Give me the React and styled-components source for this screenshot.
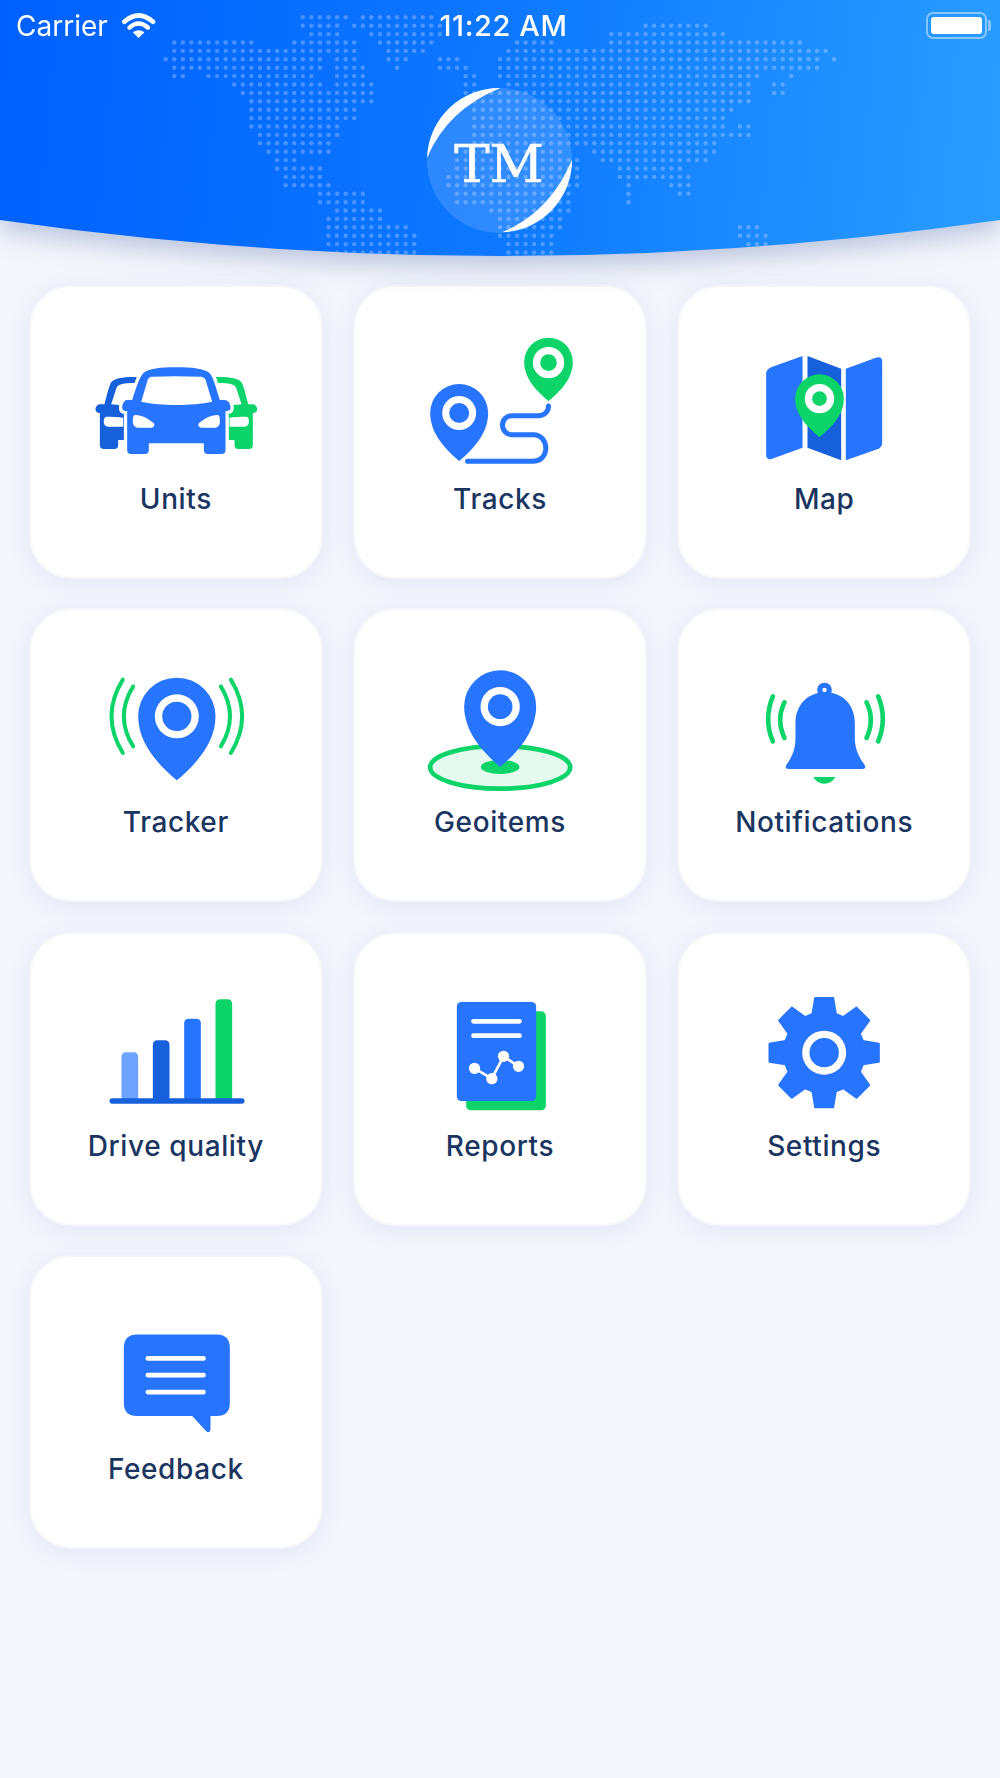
import React from 'react'
import styled, { createGlobalStyle } from 'styled-components'

const BLUE = '#2774ff'
const DARK = '#1760dc'
const LIGHT = '#6ea3ff'
const GREEN = '#0dd468'

// world map dots: one line per row, [first column, last column]
const MAP_ROWS = [
    [[16, 21], [23, 31]],
    [[16, 20], [22, 32], [56, 63]],
    [[17, 20], [24, 32], [52, 65]],
    [[1, 10], [15, 22], [25, 31], [41, 45], [52, 74]],
    [[1, 22], [26, 30], [40, 77]],
    [[0, 18], [20, 22], [26, 28], [32, 34], [39, 76], [78, 78]],
    [[1, 18], [20, 23], [27, 27], [32, 35], [39, 76]],
    [[1, 2], [5, 17], [20, 23], [35, 36], [39, 69], [73, 73]],
    [[8, 18], [20, 24], [35, 36], [40, 68], [71, 72]],
    [[9, 24], [35, 68], [71, 72]],
    [[10, 24], [36, 68]],
    [[10, 22], [36, 66]],
    [[10, 22], [36, 65]],
    [[10, 20], [36, 65], [67, 68]],
    [[11, 20], [36, 68]],
    [[11, 19], [36, 64]],
    [[12, 19], [35, 46], [50, 64]],
    [[13, 15], [34, 48], [51, 63]],
    [[13, 18], [34, 48], [53, 60]],
    [[14, 18], [33, 48], [53, 61]],
    [[14, 19], [33, 48], [54, 54], [59, 61]],
    [[18, 23], [34, 47], [54, 54], [60, 61]],
    [[18, 23], [34, 47], [54, 54]],
    [[20, 25], [38, 47]],
    [[19, 25], [39, 46]],
    [[19, 28], [39, 46], [67, 69]],
    [[19, 29], [39, 45], [67, 70]],
    [[19, 29], [40, 45], [68, 70]],
    [[20, 29], [40, 45]],
]

const MAP_DOTS = MAP_ROWS.flatMap((row, r) =>
    row.flatMap(([from, to]) =>
        Array.from({ length: to - from + 1 }, (_, i) => ({
            x: 165.7 + (from + i) * 8.57,
            y: 17.3 + r * 8.4,
        }))
    )
)

// gear outline, 8 teeth around (223, 202)
const GEAR_PATH = (() => {
    const tooth = [[-35, -116], [-27, -164], [27, -164], [35, -116]]
    const points = []
    for (let i = 0; i < 8; i++) {
        const a = (i * Math.PI) / 4
        tooth.forEach(([x, y]) => {
            points.push(`${(223 + x * Math.cos(a) - y * Math.sin(a)).toFixed(1)} ${(202 + x * Math.sin(a) + y * Math.cos(a)).toFixed(1)}`)
        })
    }
    return 'M' + points.join('L') + 'Z'
})()

const Pin = ({ cx, top, R, h, ringY, ringR, holeR, fill = BLUE }) => {
    const path = `M${cx} ${top + h}
        C${cx - R * 0.41} ${top + h * 0.87} ${cx - R} ${top + R + (h - R) * 0.45} ${cx - R} ${top + R}
        A${R} ${R} 0 0 1 ${cx + R} ${top + R}
        C${cx + R} ${top + R + (h - R) * 0.45} ${cx + R * 0.41} ${top + h * 0.87} ${cx} ${top + h}Z`
    return (
        <g>
            <path d={path} fill={fill} />
            <circle cx={cx} cy={ringY} r={ringR} fill="#fff" />
            <circle cx={cx} cy={ringY} r={holeR} fill={fill} />
        </g>
    )
}

// icons are drawn at 3x, the viewBox is the top of the card
const Art = ({ x, y, children }) => (
    <IconSvg viewBox={`${x} ${y} 882 570`}>{children}</IconSvg>
)

const sideCar = (
    <>
        <path d="M349 306C320 306 285 306 272 322C265 335 258 365 252 388H238C230 388 225 396 225 403C225 410 230 414 238 414V510Q238 522 250 522H282Q293 522 293 510V495H330V393L272 388L288 338C292 328 310 324 342 324Z" />
        <path d="M258 425C250 427 250 433 250 442C250 450 256 455 262 455H308V428C290 425 275 425 258 425Z" fill="#fff" />
    </>
)
const headlight = 'M345 420C338 420 337 426 337 440C337 452 345 458 355 458H392C400 458 404 450 400 445C385 432 365 420 345 420Z'

const UnitsIcon = () => (
    <Art x={25.5} y={30}>
        <g fill={DARK}>{sideCar}</g>
        <g fill={GREEN} transform="translate(935 0) scale(-1 1)">{sideCar}</g>
        <path
            fill={BLUE}
            stroke="#fff"
            strokeWidth="20"
            paintOrder="stroke"
            fillRule="evenodd"
            d="M467 277C420 277 385 280 368 295C355 310 345 345 335 375H320C310 375 305 390 305 398C305 405 310 408 320 408V525Q320 537 332 537H373Q385 537 385 525V505H550V525Q550 537 562 537H603Q615 537 615 525V408C626 408 630 404 630 398C630 388 624 375 612 375H598C588 345 580 310 568 295C550 280 515 277 467 277ZM395 305C385 305 382 312 380 320L362 380C420 393 515 393 575 380L557 320C555 312 550 305 540 305C490 303 440 303 395 305Z"
        />
        <path fill="#fff" d={headlight} />
        <path fill="#fff" d={headlight} transform="translate(935 0) scale(-1 1)" />
    </Art>
)

const TracksIcon = () => (
    <Art x={-141.5} y={-105}>
        <Pin cx={445} top={53} R={73} h={190} ringY={128} ringR={47} holeR={25} fill={GREEN} />
        <Pin cx={177} top={192} R={87} h={231} ringY={279} ringR={51} holeR={30} />
        <path
            fill="none"
            stroke={BLUE}
            strokeWidth="15"
            strokeLinecap="round"
            d="M445 258C445 275 432 287 415 287H335C318 287 307 300 307 315C307 332 320 344 335 344H400C422 344 437 362 437 385C437 408 420 424 398 424H202"
        />
    </Art>
)

const MapIcon = () => (
    <Art x={831.5} y={-105}>
        <path fill={BLUE} d="M1208 108L1118 140Q1099 147 1099 160V405Q1099 420 1115 417L1208 383Z" />
        <path fill={DARK} d="M1223 108L1324 146V421L1223 383Z" />
        <path fill={BLUE} d="M1338 146L1428 113Q1447 108 1447 125V370Q1447 382 1432 388L1338 421Z" />
        <Pin cx={1259} top={163} R={73} h={188} ringY={236} ringR={44} holeR={22} fill={GREEN} />
    </Art>
)

const TrackerIcon = () => (
    <Art x={-184.5} y={-125}>
        <g fill="none" stroke={GREEN} strokeWidth="12" strokeLinecap="round">
            <path d="M97 90Q29 200 97 310" />
            <path d="M128 110Q72 200 128 290" />
            <path d="M421 90Q489 200 421 310" />
            <path d="M391 110Q446 200 391 290" />
        </g>
        <Pin cx={259} top={84} R={116} h={308} ringY={200} ringR={66} holeR={44} />
    </Art>
)

const GeoitemsIcon = () => (
    <Art x={788.5} y={-125}>
        <ellipse cx={1230} cy={353} rx={210} ry={64} fill="#e6f9ef" stroke={GREEN} strokeWidth="14" />
        <ellipse cx={1230} cy={352} rx={58} ry={21} fill={GREEN} />
        <Pin cx={1230} top={62} R={108} h={290} ringY={171} ringR={59} holeR={37} />
    </Art>
)

const NotificationsIcon = () => (
    <Art x={-188.5} y={-155}>
        <g fill="none" stroke={GREEN} strokeWidth="14" strokeLinecap="round">
            <path d="M99 110Q71 178 99 245" />
            <path d="M134 128Q108 181 134 235" />
            <path d="M380 128Q406 181 380 235" />
            <path d="M415 110Q443 178 415 245" />
        </g>
        <circle cx={254} cy={91} r={22} fill={BLUE} />
        <path fill={BLUE} d="M256 98C205 98 167 135 167 190V235C167 270 155 295 140 315Q133 327 146 328H368Q381 327 374 315C359 295 345 270 345 235V190C345 135 307 98 256 98Z" />
        <circle cx={254} cy={91} r={6.5} fill="#fff" />
        <path fill={GREEN} d="M220 352H287Q275 372 253 372Q232 372 220 352Z" />
    </Art>
)

const QualityIcon = () => (
    <Art x={-184.5} y={-145}>
        <path fill={LIGHT} d="M93 360V230Q93 216 107 216H129Q143 216 143 230V360Z" />
        <path fill={DARK} d="M187 360V194Q187 180 201 180H223Q237 180 237 194V360Z" />
        <path fill={BLUE} d="M281 360V129Q281 115 295 115H317Q331 115 331 129V360Z" />
        <path fill={GREEN} d="M375 360V71Q375 57 389 57H411Q425 57 425 71V360Z" />
        <rect x={57} y={354} width={405} height={16} rx={8} fill={DARK} />
    </Art>
)

const ReportsIcon = () => (
    <Art x={788.5} y={-145}>
        <rect x={1128} y={93} width={239} height={297} rx={14} fill={GREEN} />
        <rect x={1100} y={65} width={238} height={297} rx={14} fill={BLUE} />
        <rect x={1143} y={116} width={152} height={14} rx={7} fill="#fff" />
        <rect x={1143} y={159} width={152} height={14} rx={7} fill="#fff" />
        <polyline points="1153,264 1205,295 1240,228 1285,258" fill="none" stroke="#fff" strokeWidth="8" />
        <circle cx={1153} cy={264} r={17} fill="#fff" />
        <circle cx={1205} cy={295} r={17} fill="#fff" />
        <circle cx={1240} cy={228} r={17} fill="#fff" />
        <circle cx={1285} cy={258} r={17} fill="#fff" />
    </Art>
)

const SettingsIcon = () => (
    <Art x={-218.5} y={-160}>
        <path d={GEAR_PATH} fill={BLUE} stroke={BLUE} strokeWidth="6" strokeLinejoin="round" />
        <circle cx={223} cy={202} r={66} fill="#fff" />
        <circle cx={223} cy={202} r={44} fill={BLUE} />
    </Art>
)

const FeedbackIcon = () => (
    <Art x={25.5} y={44.7}>
        <path fill={BLUE} d="M350 283H588Q628 283 628 323V488Q628 528 588 528H570V568Q568 580 558 574L515 528H350Q310 528 310 488V323Q310 283 350 283Z" />
        <rect x={375} y={348} width={181} height={14} rx={7} fill="#fff" />
        <rect x={375} y={398} width={181} height={14} rx={7} fill="#fff" />
        <rect x={375} y={449} width={181} height={14} rx={7} fill="#fff" />
    </Art>
)

const ITEMS = [
    { label: 'Units', Icon: UnitsIcon },
    { label: 'Tracks', Icon: TracksIcon },
    { label: 'Map', Icon: MapIcon },
    { label: 'Tracker', Icon: TrackerIcon },
    { label: 'Geoitems', Icon: GeoitemsIcon },
    { label: 'Notifications', Icon: NotificationsIcon },
    { label: 'Drive quality', Icon: QualityIcon },
    { label: 'Reports', Icon: ReportsIcon },
    { label: 'Settings', Icon: SettingsIcon },
    { label: 'Feedback', Icon: FeedbackIcon },
]

const App = () => (
    <Page>
        <GlobalStyle />
        <HeroShadow>
            <Hero>
                <MapDots viewBox="0 0 1000 256">
                    {MAP_DOTS.map((d, i) => <circle key={i} cx={d.x} cy={d.y} r={2.2} />)}
                </MapDots>
                <StatusBar>
                    <Carrier>
                        Carrier
                        <svg width="35" height="25" viewBox="360 36 104 74">
                            <path d="M370 62Q412 25 455 62" fill="none" stroke="#fff" strokeWidth="14" strokeLinecap="round" />
                            <path d="M385 79Q412 55 440 79" fill="none" stroke="#fff" strokeWidth="13" strokeLinecap="round" />
                            <path d="M395 93Q412 81 430 93L412 110Z" fill="#fff" />
                        </svg>
                    </Carrier>
                    <Clock>11:22 AM</Clock>
                    <Battery>
                        <BatteryLevel />
                    </Battery>
                </StatusBar>
                <Logo>
                    <LogoArcs viewBox="80 55 435 435">
                        <path d="M300 55A217 217 0 0 0 80 265Q140 120 300 55Z" fill="#fff" />
                        <path d="M515 270A217 217 0 0 1 305 488Q450 427 515 270Z" fill="#fff" />
                    </LogoArcs>
                    <LogoText>TM</LogoText>
                </Logo>
            </Hero>
        </HeroShadow>
        <Grid>
            {ITEMS.map(({ label, Icon }) => (
                <Card key={label}>
                    <Icon />
                    <Label>{label}</Label>
                </Card>
            ))}
        </Grid>
    </Page>
)

export default App

const GlobalStyle = createGlobalStyle`
    body {
        margin      : 0;
        font-family : Inter, "Liberation Sans", sans-serif;
    }
`
const Page = styled.div`
    min-height : 1778px;
    background : #f4f6fb;
    overflow   : hidden;
`
const HeroShadow = styled.div`
    filter : drop-shadow(0 8px 14px rgba(40, 70, 150, 0.32));
`
const Hero = styled.header`
    position        : relative;
    height          : 256px;
    display         : flex;
    flex-direction  : column;
    align-items     : center;
    background      : linear-gradient(95deg, #0060ff 0%, #0d78ff 50%, #2a9dff 100%);
    clip-path       : path('M0 0H1000V220Q500 292 0 220Z');
`
const MapDots = styled.svg`
    position : absolute;
    top      : 0;
    left     : 0;
    width    : 1000px;
    height   : 256px;
    fill     : rgba(255, 255, 255, 0.26);
`
const StatusBar = styled.div`
    position              : relative;
    box-sizing            : border-box;
    width                 : 100%;
    height                : 50px;
    padding               : 1px 13px 0 16px;
    display               : grid;
    grid-template-columns : 1fr auto 1fr;
    align-items           : center;
    color                 : #fff;
    font-size             : 28px;
`
const Carrier = styled.div`
    display     : flex;
    align-items : center;
    gap         : 13px;
    font-weight : 400;
`
const Clock = styled.div`
    font-weight    : 500;
    font-size      : 29px;
    letter-spacing : 0.6px;
    margin-left    : 4px;
`
const Battery = styled.div`
    justify-self  : end;
    position      : relative;
    box-sizing    : border-box;
    width         : 61px;
    height        : 27px;
    padding       : 3px;
    border        : 2px solid rgba(255, 255, 255, 0.45);
    border-radius : 7px;

    &::after {
        content       : '';
        position      : absolute;
        top           : 6px;
        right         : -6px;
        width         : 3px;
        height        : 11px;
        background    : rgba(255, 255, 255, 0.45);
        border-radius : 0 2px 2px 0;
    }
`
const BatteryLevel = styled.div`
    height        : 100%;
    background    : #fff;
    border-radius : 3px;
`
const Logo = styled.div`
    position        : relative;
    width           : 145px;
    height          : 145px;
    margin          : 38px 0 0 -2px;
    display         : flex;
    align-items     : center;
    justify-content : center;
    border-radius   : 50%;
    background      : rgba(255, 255, 255, 0.14);
`
const LogoArcs = styled.svg`
    position : absolute;
    top      : 0;
    left     : 0;
    width    : 145px;
    height   : 145px;
`
const LogoText = styled.div`
    margin-top          : 6px;
    color               : #fff;
    font-family         : "DejaVu Serif", "Liberation Serif", serif;
    font-size           : 53px;
    line-height         : 1;
    -webkit-text-stroke : 0.6px #fff;
`
const Grid = styled.main`
    display               : grid;
    grid-template-columns : repeat(3, 1fr);
    column-gap            : 29.5px;
    row-gap               : 29.3px;
    padding               : 29px 28.5px 0;
`
const Card = styled.section`
    box-sizing     : border-box;
    height         : 294px;
    display        : flex;
    flex-direction : column;
    align-items    : center;
    background     : #fff;
    border         : 2px solid #f5f6fa;
    border-radius  : 42px;
    box-shadow     : 0 4px 22px rgba(60, 100, 220, 0.1);
`
const IconSvg = styled.svg`
    flex   : none;
    width  : 294px;
    height : 190px;
    margin : -2px -2px 0;
`
const Label = styled.div`
    height         : 48px;
    line-height    : 48px;
    color          : #1a3560;
    font-size      : 28px;
    font-weight    : 500;
    letter-spacing : 0.6px;
    white-space    : nowrap;
`
